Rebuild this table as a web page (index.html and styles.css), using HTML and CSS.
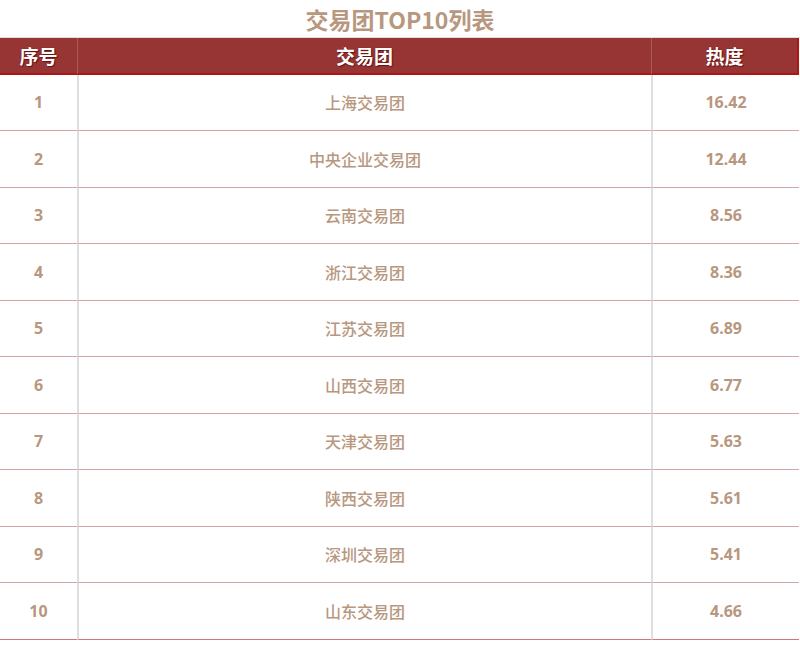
FILE: index.html
```html
<!DOCTYPE html>
<html lang="zh">
<head>
<meta charset="utf-8">
<link rel="stylesheet" href="styles.css">
</head>
<body>
<div class="page">
  <h1 class="title">交易团TOP10列表</h1>
  <table class="rank">
    <thead>
      <tr><th class="c-idx">序号</th><th class="c-name">交易团</th><th class="c-heat">热度</th></tr>
    </thead>
    <tbody>
      <tr><td class="num">1</td><td>上海交易团</td><td class="num">16.42</td></tr>
      <tr><td class="num">2</td><td>中央企业交易团</td><td class="num">12.44</td></tr>
      <tr><td class="num">3</td><td>云南交易团</td><td class="num">8.56</td></tr>
      <tr><td class="num">4</td><td>浙江交易团</td><td class="num">8.36</td></tr>
      <tr><td class="num">5</td><td>江苏交易团</td><td class="num">6.89</td></tr>
      <tr><td class="num">6</td><td>山西交易团</td><td class="num">6.77</td></tr>
      <tr><td class="num">7</td><td>天津交易团</td><td class="num">5.63</td></tr>
      <tr><td class="num">8</td><td>陕西交易团</td><td class="num">5.61</td></tr>
      <tr><td class="num">9</td><td>深圳交易团</td><td class="num">5.41</td></tr>
      <tr><td class="num">10</td><td>山东交易团</td><td class="num">4.66</td></tr>
    </tbody>
  </table>
</div>
</body>
</html>
```
FILE: styles.css
```css
html, body {
  margin: 0;
  padding: 0;
  background: #ffffff;
}
body {
  font-family: "Noto Sans CJK SC", "Noto Sans", sans-serif;
  color: #b8977f;
}
.page {
  width: 800px;
}
.title {
  margin: 0;
  height: 37px;
  line-height: 38px;
  text-align: center;
  font-size: 23px;
  font-weight: 700;
  color: #b8977f;
  border-bottom: 1px solid #e4dcdc;
}
.rank {
  width: 799px;
  border-collapse: separate;
  border-spacing: 0;
  table-layout: fixed;
}
.rank th {
  padding: 0;
  line-height: 35px;
  background: #973535;
  color: #ffffff;
  font-size: 19px;
  font-weight: 700;
  text-shadow: 0 0 1px #6a1010, 1px 1px 1px #6a1010;
  border-bottom: 2px solid #b01515;
  border-left: 1px solid #a95a5a;
}
.rank th:first-child { border-left: none; }
.rank th:last-child { border-right: 2px solid #b01515; }
.c-idx { width: 77px; }
.c-heat { width: 145px; }
.rank td {
  padding: 0;
  line-height: 55px;
  text-align: center;
  font-size: 16px;
  font-weight: 500;
  border-bottom: 1px solid #d6a4a4;
  border-left: 2px solid #dedede;
}
.rank tbody tr:nth-child(even) td { line-height: 56px; }
.rank td:first-child { border-left: none; }
.rank td.num {
  font-family: "Noto Sans", "Noto Sans CJK SC", sans-serif;
  font-weight: 700;
}
.rank tbody tr:last-child td {
  border-bottom: 1px solid #d77575;
}
```
